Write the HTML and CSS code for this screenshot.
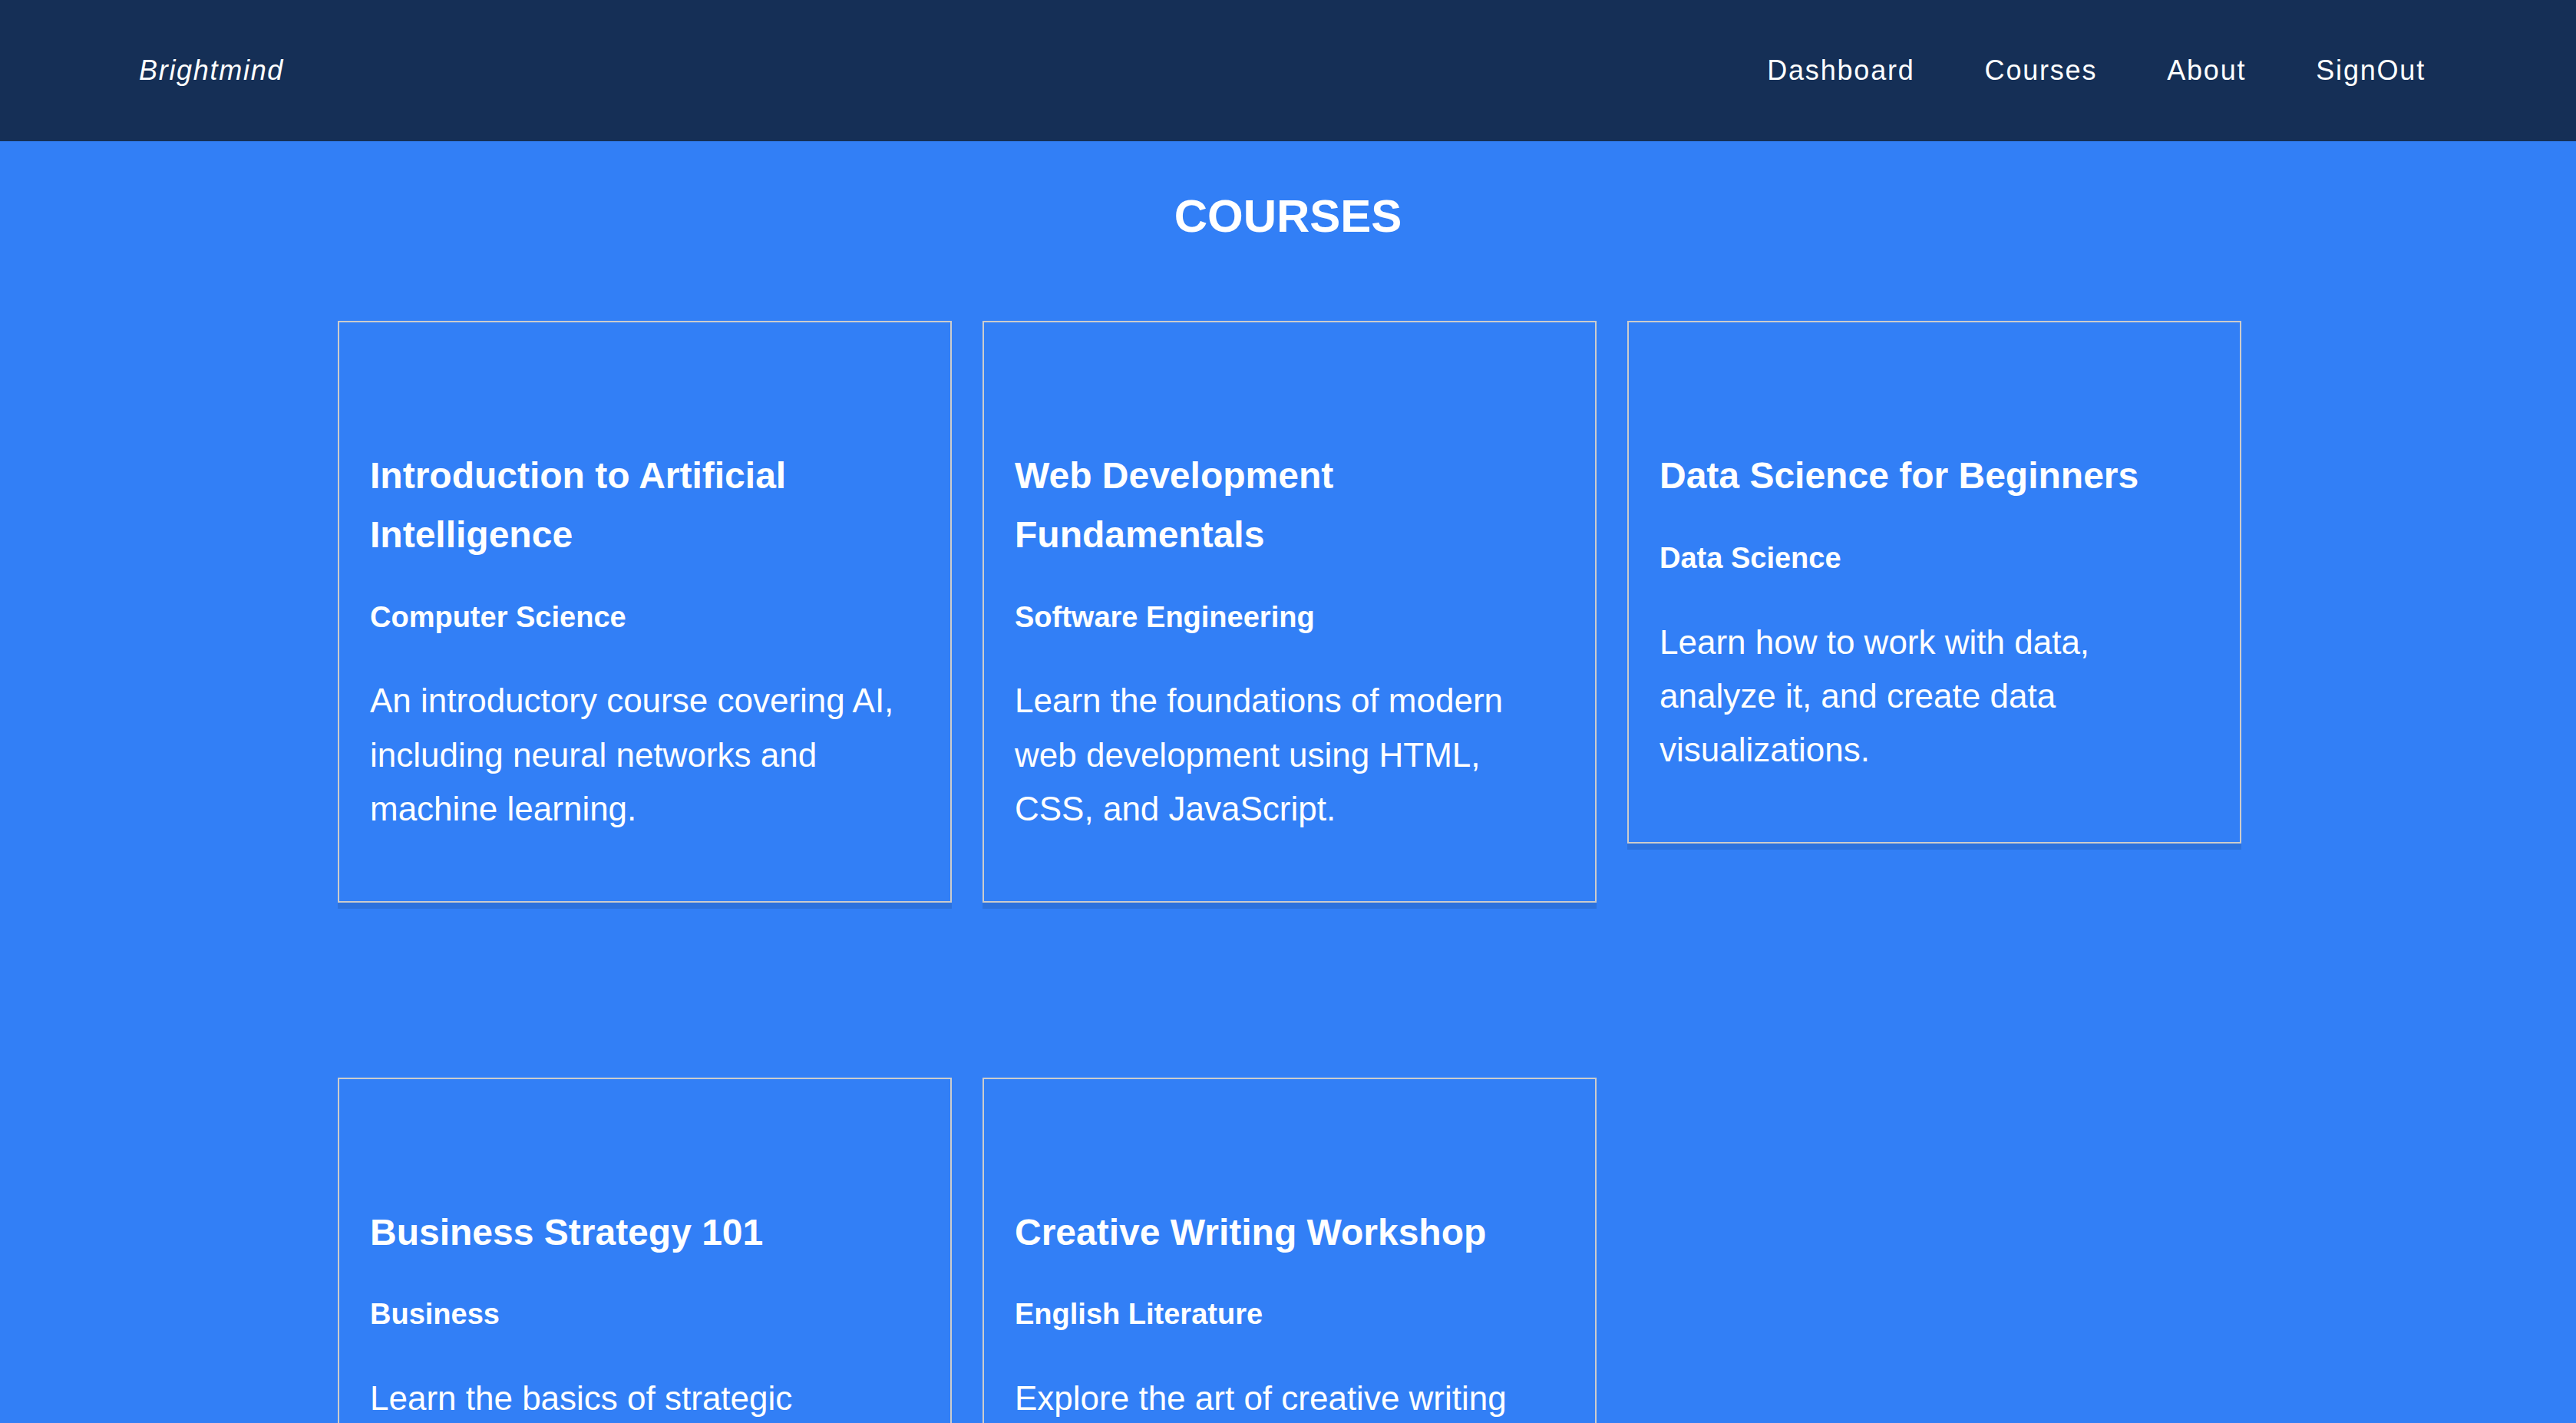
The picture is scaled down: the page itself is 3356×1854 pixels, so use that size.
FILE: index.html
```html
<!DOCTYPE html>
<html lang="en">
<head>
<meta charset="utf-8">
<title>Brightmind - Courses</title>
<link rel="stylesheet" href="styles.css">
</head>
<body>
<header class="navbar">
  <div class="logo">Brightmind</div>
  <nav class="nav-links">
    <a href="#">Dashboard</a>
    <a href="#">Courses</a>
    <a href="#">About</a>
    <a href="#">SignOut</a>
  </nav>
</header>
<main class="main">
  <h1 class="page-title">COURSES</h1>
  <div class="course-grid">
    <div class="card">
      <h3 class="card-title">Introduction to Artificial Intelligence</h3>
      <h4 class="card-category">Computer Science</h4>
      <p class="card-desc">An introductory course covering AI, including neural networks and machine learning.</p>
    </div>
    <div class="card">
      <h3 class="card-title">Web Development Fundamentals</h3>
      <h4 class="card-category">Software Engineering</h4>
      <p class="card-desc">Learn the foundations of modern web development using HTML, CSS, and JavaScript.</p>
    </div>
    <div class="card">
      <h3 class="card-title">Data Science for Beginners</h3>
      <h4 class="card-category">Data Science</h4>
      <p class="card-desc">Learn how to work with data, analyze it, and create data visualizations.</p>
    </div>
    <div class="card">
      <h3 class="card-title">Business Strategy 101</h3>
      <h4 class="card-category">Business</h4>
      <p class="card-desc">Learn the basics of strategic planning and business management.</p>
    </div>
    <div class="card">
      <h3 class="card-title">Creative Writing Workshop</h3>
      <h4 class="card-category">English Literature</h4>
      <p class="card-desc">Explore the art of creative writing through fiction, poetry, and storytelling.</p>
    </div>
  </div>
</main>
</body>
</html>
```
FILE: styles.css
```css
* {
  box-sizing: border-box;
}

html, body {
  margin: 0;
  padding: 0;
}

body {
  background: #327ff6;
  color: #ffffff;
  font-family: "Liberation Sans", Arial, sans-serif;
}

.navbar {
  height: 184px;
  background: #152f56;
  display: flex;
  align-items: center;
  justify-content: space-between;
  padding: 0 196px 0 181px;
}

.logo {
  font-size: 36px;
  font-style: italic;
  letter-spacing: 1.7px;
  color: #ffffff;
}

.nav-links {
  display: flex;
  align-items: center;
  gap: 91px;
}

.nav-links a {
  font-size: 36px;
  letter-spacing: 1.8px;
  color: #ffffff;
  text-decoration: none;
}

.main {
  padding: 0 0 80px;
}

.page-title {
  margin: 62px 0 100px;
  font-size: 60px;
  line-height: 1.2;
  font-weight: bold;
  text-align: center;
}

.course-grid {
  display: grid;
  grid-template-columns: repeat(3, 800px);
  column-gap: 40px;
  row-gap: 228px;
  justify-content: center;
  align-items: start;
  padding-left: 4px;
}

.card {
  border: 2px solid #cccccc;
  padding: 162px 40px 40px;
  box-shadow: 0 8px 0 rgba(0, 0, 0, 0.1);
}

.card-title {
  margin: 0;
  font-size: 48px;
  line-height: 1.6;
  font-weight: bold;
}

.card-category {
  margin: 38px 0;
  font-size: 38px;
  line-height: 1.6;
  font-weight: bold;
}

.card-desc {
  margin: 44px 0;
  font-size: 44px;
  line-height: 1.6;
}
```
